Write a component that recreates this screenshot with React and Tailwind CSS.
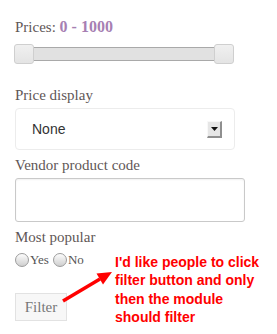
export default function App() {
  const label = "block text-[15px] leading-5 text-[#5f5757]"

  return (
    <div
      className="relative w-[277px] h-[334px] bg-white pl-[15px] pt-[17px]"
      style={{ fontFamily: '"Liberation Serif", Georgia, serif' }}
    >
      <span className={label}>
        Prices: <span className="font-bold text-[16px] text-[#a77fb3]">0 - 1000</span>
      </span>

      {/* range slider */}
      <div className="mt-[7px] flex items-center w-[220px] -ml-px">
        <div className="w-5 h-5 shrink-0 rounded-[3px] border border-[#cfcfcf] bg-gradient-to-b from-[#f0f0f0] to-[#e4e4e4]" />
        <div className="flex-1 h-[14px] bg-[#e1e1e1] border-t border-b border-[#a9a9a9]" />
        <div className="w-5 h-5 shrink-0 rounded-[3px] border border-[#cfcfcf] bg-gradient-to-b from-[#f0f0f0] to-[#e4e4e4]" />
      </div>

      <span className={`${label} mt-[21px]`}>Price display</span>
      <div className="mt-[3px] w-[220px] h-[42px] rounded-[4px] border border-[#ececec] flex items-center justify-between pl-[16px] pr-[12px]">
        <span
          className="text-[14px] text-[#333]"
          style={{ fontFamily: '"Liberation Sans", Arial, sans-serif' }}
        >
          None
        </span>
        <div className="w-[15px] h-[17px] bg-[#e6e6e6] border-r-2 border-b-2 border-[#8f8f8f] border-t border-l border-t-[#f8f8f8] border-l-[#f8f8f8] flex items-center justify-center">
          <svg width="7" height="4" viewBox="0 0 7 4">
            <path d="M0 0h7L3.5 4z" fill="#111" />
          </svg>
        </div>
      </div>

      <span className={`${label} mt-[5px]`}>Vendor product code</span>
      <div className="mt-[3px] w-[230px] h-[44px] rounded-[3px] border border-[#c9c9c9] shadow-[inset_0_1px_2px_rgba(0,0,0,0.06)]" />

      <span className={`${label} mt-[5px]`}>Most popular</span>
      <div className="mt-[6px] flex items-center text-[13px] leading-[14px] text-[#555]">
        <span className="w-[14px] h-[14px] rounded-full border border-[#9c9c9c] bg-gradient-to-b from-[#fdfdfd] to-[#cfcfcf]" />
        <span className="ml-px">Yes</span>
        <span className="ml-[4px] w-[14px] h-[14px] rounded-full border border-[#9c9c9c] bg-gradient-to-b from-[#fdfdfd] to-[#cfcfcf]" />
        <span className="ml-px">No</span>
      </div>

      <button className="mt-[26px] w-[52px] h-[28px] bg-[#f7f7f7] border border-[#e2e2e2] text-[15px] text-[#777] flex items-center justify-center">
        Filter
      </button>

      {/* annotation */}
      <svg className="absolute left-0 top-0" width="277" height="334" viewBox="0 0 277 334">
        <line x1="63" y1="301" x2="100" y2="279" stroke="#f00" strokeWidth="3.5" />
        <path d="M112 272L103 284.5L96.5 273.5z" fill="#f00" />
      </svg>
      <div
        className="absolute left-[115px] top-[253px] text-[14px] leading-[18.3px] font-bold text-[#ff0000]"
        style={{ fontFamily: '"Liberation Sans", Arial, sans-serif' }}
      >
        I'd like people to click
        <br />
        filter button and only
        <br />
        then the module
        <br />
        should filter
      </div>
    </div>
  )
}
